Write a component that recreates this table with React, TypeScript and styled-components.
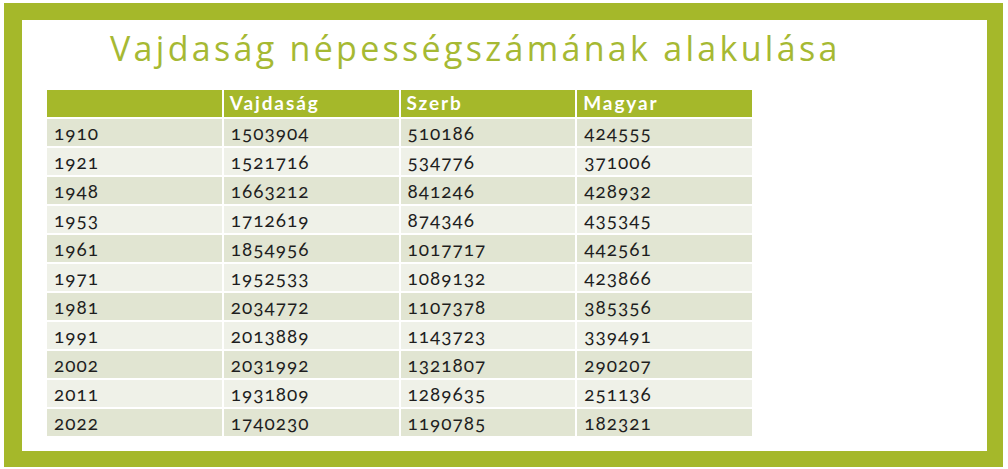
import React from "react";
import styled, { createGlobalStyle } from "styled-components";

const GlobalStyle = createGlobalStyle`
  html, body {
    margin: 0;
    padding: 0;
    background: #ffffff;
  }
  body {
    font-family: Lato, "Open Sans", "Noto Sans", sans-serif;
  }
`;

const green = "#a5b82a";

const rows: [string, string, string, string][] = [
  ["1910", "1503904", "510186", "424555"],
  ["1921", "1521716", "534776", "371006"],
  ["1948", "1663212", "841246", "428932"],
  ["1953", "1712619", "874346", "435345"],
  ["1961", "1854956", "1017717", "442561"],
  ["1971", "1952533", "1089132", "423866"],
  ["1981", "2034772", "1107378", "385356"],
  ["1991", "2013889", "1143723", "339491"],
  ["2002", "2031992", "1321807", "290207"],
  ["2011", "1931809", "1289635", "251136"],
  ["2022", "1740230", "1190785", "182321"],
];

const Outer = styled.div`
  width: 1008px;
  height: 469px;
  box-sizing: border-box;
  padding: 3px 5px 2px 4px;
`;

const Frame = styled.div`
  height: 100%;
  box-sizing: border-box;
  border-style: solid;
  border-color: ${green};
  border-width: 17px 16px 16px 18px;
  background: #ffffff;
  display: flex;
  flex-direction: column;
  padding: 0 0 0 25px;
`;

const Title = styled.h1`
  margin: 0 0 0 63px;
  font-family: "Open Sans", Lato, sans-serif;
  font-weight: 400;
  font-size: 34px;
  line-height: 56px;
  color: #a6b933;
  letter-spacing: 3.3px;
  white-space: nowrap;
`;

const Table = styled.table`
  margin-top: 12px;
  width: 709px;
  border-collapse: separate;
  border-spacing: 2px 2px;
  margin-left: -2px;
  font-variant-numeric: oldstyle-nums;
  font-feature-settings: "onum" 1;
`;

const HeadCell = styled.th`
  background: ${green};
  color: #ffffff;
  font-weight: 700;
  font-size: 19px;
  text-align: left;
  height: 27px;
  padding: 0 0 2px 6px;
  box-sizing: border-box;
  letter-spacing: 1.9px;
  width: 25%;
`;

const Cell = styled.td<{ $odd: boolean }>`
  background: ${({ $odd }) => ($odd ? "#e1e5d2" : "#eff1e8")};
  color: #1e1e1e;
  font-size: 19px;
  height: 27px;
  padding: 0 0 1px 7px;
  box-sizing: border-box;
  letter-spacing: 1px;
`;

export default function App() {
  return (
    <>
      <GlobalStyle />
      <Outer>
        <Frame>
          <Title>Vajdaság népességszámának alakulása</Title>
          <Table>
            <thead>
              <tr>
                <HeadCell></HeadCell>
                <HeadCell>Vajdaság</HeadCell>
                <HeadCell>Szerb</HeadCell>
                <HeadCell>Magyar</HeadCell>
              </tr>
            </thead>
            <tbody>
              {rows.map((r, i) => (
                <tr key={r[0]}>
                  {r.map((v, j) => (
                    <Cell key={j} $odd={i % 2 === 0}>
                      {v}
                    </Cell>
                  ))}
                </tr>
              ))}
            </tbody>
          </Table>
        </Frame>
      </Outer>
    </>
  );
}
